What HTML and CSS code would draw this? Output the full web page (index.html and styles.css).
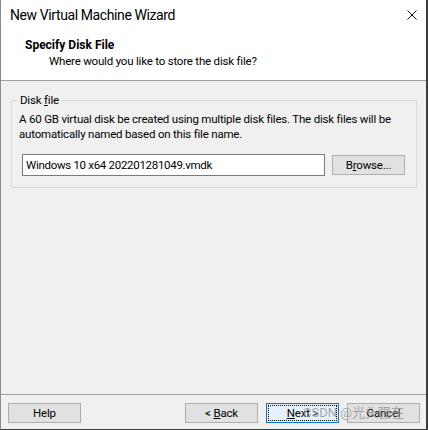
FILE: index.html
```html
<!DOCTYPE html>
<html>
<head>
<meta charset="utf-8">
<link rel="stylesheet" href="styles.css">
</head>
<body>
<div class="window">
  <div class="titlebar">
    <span class="title">New Virtual Machine Wizard</span>
    <svg class="close" width="10" height="10" viewBox="0 0 10 10"><path d="M0.5 0.5 L9.5 9.5 M9.5 0.5 L0.5 9.5" stroke="#111" stroke-width="1" fill="none"/></svg>
  </div>
  <div class="header">
    <div class="h-title">Specify Disk File</div>
    <div class="h-sub">Where would you like to store the disk file?</div>
  </div>
  <div class="content">
    <fieldset class="group">
      <legend class="legend">Disk <u>f</u>ile</legend>
      <p class="desc">A 60 GB virtual disk be created using multiple disk files. The disk files will be automatically named based on this file name.</p>
      <div class="row">
        <div class="input">Windows 10 x64 202201281049.vmdk</div>
        <div class="btn"><span>B<u>r</u>owse...</span></div>
      </div>
    </fieldset>
  </div>
  <div class="footer">
    <div class="btn"><span>Help</span></div>
    <div class="spacer"></div>
    <div class="btn"><span>&lt; <u>B</u>ack</span></div>
    <div class="btn default"><span class="focus"><span><u>N</u>ext &gt;</span></span></div>
    <div class="btn"><span>Cancel</span></div>
    <span class="watermark">CSDN @光头强在</span>
  </div>
</div>
</body>
</html>
```
FILE: styles.css
```css
html, body {
  margin: 0;
  padding: 0;
  background: #ffffff;
}
.window {
  width: 428px;
  height: 430px;
  box-sizing: border-box;
  border-left: 1px solid #8c8c8c;
  border-right: 2px solid #3c3c3c;
  border-bottom: 1px solid #3c3c3c;
  display: flex;
  flex-direction: column;
  font-family: Roboto, "Noto Sans CJK SC", sans-serif;
  font-size: 11.5px;
  letter-spacing: -0.2px;
  color: #000;
  background: #f0f0f0;
}
.titlebar {
  height: 30px;
  flex: none;
  background: #fff;
  display: flex;
  align-items: center;
  padding-left: 9px;
  padding-right: 9px;
}
.title {
  font-size: 14px;
  letter-spacing: -0.4px;
  flex: 1;
  color: #000;
}
.close {
  display: block;
}
.header {
  height: 51px;
  flex: none;
  box-sizing: border-box;
  background: #fff;
  border-bottom: 1px solid #a0a0a0;
  display: flex;
  flex-direction: column;
  padding-top: 7px;
}
.h-title {
  font-weight: bold;
  font-size: 12px;
  letter-spacing: 0;
  padding-left: 24px;
  line-height: 16px;
}
.h-sub {
  padding-left: 48px;
  line-height: 16px;
}
.content {
  flex: 1;
  padding: 11px 9px 0 10px;
}
.group {
  margin: 0;
  padding: 0 11px 11px 10px;
  border: 1px solid #dcdcdc;
  min-width: 0;
}
.legend {
  padding: 0 2px;
  margin-left: -4px;
  line-height: 16px;
}
.desc {
  margin: 4px 0 0 -3px;
  line-height: 15px;
}
.row {
  display: flex;
  align-items: center;
  margin-top: 12px;
  gap: 7px;
}
.input {
  flex: 1;
  height: 20px;
  line-height: 20px;
  border: 1px solid #7a7a7a;
  background: #fff;
  padding-left: 3px;
  letter-spacing: -0.3px;
  white-space: nowrap;
}
.btn {
  width: 73px;
  height: 20px;
  box-sizing: border-box;
  border: 1px solid #adadad;
  background: #e1e1e1;
  display: flex;
  align-items: center;
  justify-content: center;
  line-height: 16px;
  flex: none;
  white-space: nowrap;
}
.btn.default {
  border-color: #0078d7;
  background: #e5f1fb;
  padding: 1px;
}
.focus {
  flex: 1;
  align-self: stretch;
  border: 1px dotted #000;
  display: flex;
  align-items: center;
  justify-content: center;
}
.footer {
  height: 35px;
  flex: none;
  box-sizing: border-box;
  border-top: 1px solid #a0a0a0;
  display: flex;
  align-items: flex-start;
  padding: 8px 6px 0 7px;
  gap: 8px;
  position: relative;
}
.spacer {
  flex: 1;
}
.watermark {
  position: absolute;
  left: 302px;
  top: 8px;
  font-size: 13px;
  letter-spacing: 0;
  line-height: 20px;
  color: rgba(140, 140, 140, 0.75);
  white-space: nowrap;
}
```
